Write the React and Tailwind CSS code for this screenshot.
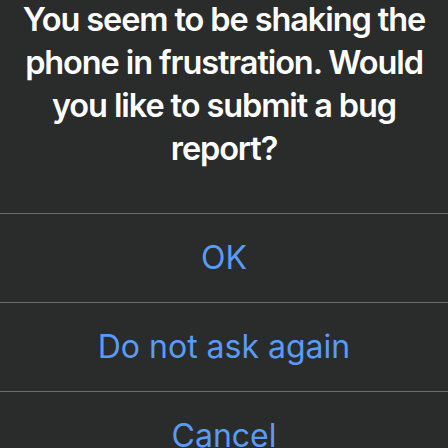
export default function App() {
  const actions = ["OK", "Do not ask again", "Cancel"];

  return (
    <div
      className="h-[448px] w-[448px] overflow-hidden bg-[#2a2b2b] text-center"
      style={{ fontFamily: "Inter, 'Noto Sans', sans-serif" }}
    >
      <div className="flex h-[213px] flex-col">
        <p className="-mt-[2px] whitespace-nowrap text-[32.5px] leading-[43px] font-semibold tracking-[-1.1px] text-white">
          You seem to be shaking the
          <br />
          phone in frustration. Would
          <br />
          you like to submit a bug
          <br />
          report?
        </p>
      </div>

      {actions.map((label) => (
        <button
          key={label}
          className="flex h-[89px] w-full items-center justify-center border-t border-[#6a6a6a] text-[32px] text-[#5a9bf6]"
        >
          {label}
        </button>
      ))}
    </div>
  );
}
